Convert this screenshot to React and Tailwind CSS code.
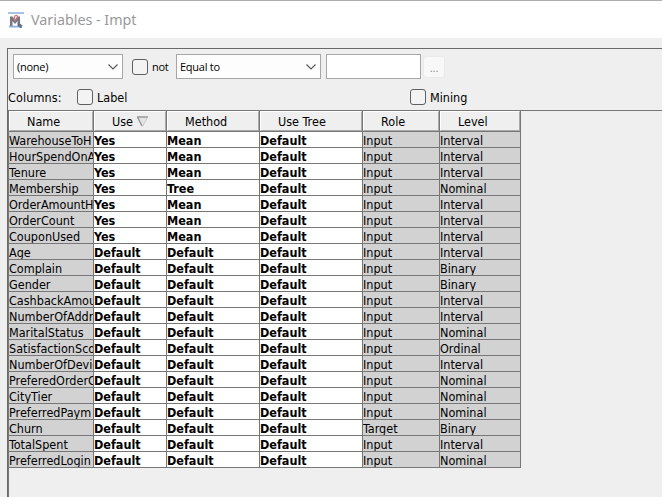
const columns = [
  { name: 'Name', width: 'w-[85px]', label: 'w-[33px]', sorted: false },
  { name: 'Use', width: 'w-[73px]', label: 'w-[21px]', sorted: true },
  { name: 'Method', width: 'w-[93px]', label: 'w-[42px]', sorted: false },
  { name: 'Use Tree', width: 'w-[103px]', label: 'w-[52px]', sorted: false },
  { name: 'Role', width: 'w-[77px]', label: 'w-[25px]', sorted: false },
  { name: 'Level', width: 'w-[81px]', label: 'w-[29px]', sorted: false },
];

const rows = [
  ['WarehouseToH', 'Yes', 'Mean', 'Default', 'Input', 'Interval'],
  ['HourSpendOnA', 'Yes', 'Mean', 'Default', 'Input', 'Interval'],
  ['Tenure', 'Yes', 'Mean', 'Default', 'Input', 'Interval'],
  ['Membership', 'Yes', 'Tree', 'Default', 'Input', 'Nominal'],
  ['OrderAmountH', 'Yes', 'Mean', 'Default', 'Input', 'Interval'],
  ['OrderCount', 'Yes', 'Mean', 'Default', 'Input', 'Interval'],
  ['CouponUsed', 'Yes', 'Mean', 'Default', 'Input', 'Interval'],
  ['Age', 'Default', 'Default', 'Default', 'Input', 'Interval'],
  ['Complain', 'Default', 'Default', 'Default', 'Input', 'Binary'],
  ['Gender', 'Default', 'Default', 'Default', 'Input', 'Binary'],
  ['CashbackAmou', 'Default', 'Default', 'Default', 'Input', 'Interval'],
  ['NumberOfAddr', 'Default', 'Default', 'Default', 'Input', 'Interval'],
  ['MaritalStatus', 'Default', 'Default', 'Default', 'Input', 'Nominal'],
  ['SatisfactionSco', 'Default', 'Default', 'Default', 'Input', 'Ordinal'],
  ['NumberOfDevic', 'Default', 'Default', 'Default', 'Input', 'Interval'],
  ['PreferedOrderC', 'Default', 'Default', 'Default', 'Input', 'Nominal'],
  ['CityTier', 'Default', 'Default', 'Default', 'Input', 'Nominal'],
  ['PreferredPaym', 'Default', 'Default', 'Default', 'Input', 'Nominal'],
  ['Churn', 'Default', 'Default', 'Default', 'Target', 'Binary'],
  ['TotalSpent', 'Default', 'Default', 'Default', 'Input', 'Interval'],
  ['PreferredLogin', 'Default', 'Default', 'Default', 'Input', 'Nominal'],
];

function AppIcon() {
  return (
    <svg width="16" height="16" viewBox="0 0 16 16" className="shrink-0">
      <path d="M0 1h16M1 14.600h13" stroke="#8eacdd" strokeWidth="1.600" />
      <path d="M2 14V4.500h2.500L7 8l2.500-3.500H12V14h-2.500V9L7 12 4.500 9v5z" fill="#77777f" />
      <path d="M6.500 7C5.500 3 9.500 2.500 9.500 4.500S7 7 7 9" fill="none" stroke="#d5707c" strokeWidth="1.300" />
      <path d="M10 10l5 4-2 .3 1 1.700h-2l-1-1.500L10 15z" fill="#646d86" />
    </svg>
  );
}

function Chevron() {
  return (
    <svg width="10" height="6" viewBox="0 0 10 6" fill="none" className="shrink-0">
      <path d="M0.500 0.500L5 5l4.500-4.500" stroke="#555" strokeWidth="1.100" />
    </svg>
  );
}

function Select({ value, className }) {
  return (
    <div className={`flex h-[25px] items-center justify-between border border-[#a6a6a6] bg-[#fdfdfd] pl-[3px] pr-1 font-['Open_Sans',sans-serif] text-[11px] [font-stretch:normal] ${className}`}>
      <span className="pt-px tracking-[-0.25px]">{value}</span>
      <Chevron />
    </div>
  );
}

function Checkbox() {
  return <span className="size-4 shrink-0 rounded-[3px] border border-[#606060] bg-[#f3f3f3]" />;
}

export default function App() {
  return (
    <div className="flex h-[497px] w-[662px] flex-col overflow-hidden bg-[#efefef] font-['DejaVu_Sans_Condensed','DejaVu_Sans',sans-serif] text-[12.5px] text-black [font-stretch:condensed]">
      <header className="flex h-[38px] shrink-0 items-center gap-[7px] border-t border-[#acacac] bg-white pl-2">
        <AppIcon />
        <h1 className="pt-px font-['Noto_Sans',sans-serif] text-[14.3px] leading-5 text-[#999] [font-stretch:normal]">Variables - Impt</h1>
      </header>

      <main className="ml-[7px] mt-[10px] flex grow flex-col border-l border-t border-[#696969]">
        <div className="flex h-[35px] shrink-0 items-center pl-[5px]">
          <Select value="(none)" className="w-[110px]" />
          <label className="ml-[9px] flex items-center gap-1 font-['Open_Sans',sans-serif] text-[11px] [font-stretch:normal]">
            <Checkbox />
            <span className="w-5 pt-px tracking-[-0.25px]">not</span>
          </label>
          <Select value="Equal to" className="ml-[4px] w-[145px]" />
          <div className="ml-[5px] h-[25px] w-[95px] border border-[#a6a6a6] bg-white" />
          <div className="ml-[2px] flex h-[22px] w-[22px] items-center justify-center rounded-[3px] border border-[#eaeaea] bg-[#f8f8f8] pt-[3px] text-[10px] text-[#777]">...</div>
        </div>

        <div className="flex h-[26px] shrink-0 items-center">
          <span className="w-[69px] pt-[2px] tracking-[0.1px]">Columns:</span>
          <label className="flex w-[333px] items-center gap-1">
            <Checkbox />
            <span className="pt-[2px]">Label</span>
          </label>
          <label className="flex items-center gap-1">
            <Checkbox />
            <span className="pt-[2px]">Mining</span>
          </label>
        </div>

        <div className="flex grow flex-col border-l border-t border-[#777]">
          <div className="flex h-[21px] shrink-0">
            {columns.map((c) => (
              <div key={c.name} className={`h-[21px] shrink-0 border-b border-r border-[#777] ${c.width}`}>
                <div className="flex h-5 items-center border border-b-[#aaa] border-l-white border-r-[#aaa] border-t-white pl-[17px]">
                  <span className={`whitespace-nowrap pt-[2px] ${c.label}`}>{c.name}</span>
                  {c.sorted && (
                    <svg width="11" height="11" viewBox="0 0 11 11" className="ml-[4px]">
                      <path d="M0.500 1L5.500 10.500 10.500 1z" fill="#e4e4e4" />
                      <path d="M11 1H0.500L5 10" fill="none" stroke="#999" strokeWidth="1.500" />
                      <path d="M5.500 10.500L10.500 1.500" stroke="#c8c8c8" />
                    </svg>
                  )}
                </div>
              </div>
            ))}
          </div>
          {rows.map((row) => (
            <div key={row[0]} className="flex h-4 shrink-0">
              {row.map((value, i) => (
                <div
                  key={columns[i].name}
                  className={`shrink-0 overflow-hidden whitespace-nowrap border-b border-r border-[#777] leading-[18px] ${columns[i].width} ${
                    i > 0 && i < 4 ? 'bg-white font-bold' : 'bg-[#d2d2d2]'
                  }`}
                >
                  {value}
                </div>
              ))}
            </div>
          ))}
        </div>
      </main>
    </div>
  );
}
